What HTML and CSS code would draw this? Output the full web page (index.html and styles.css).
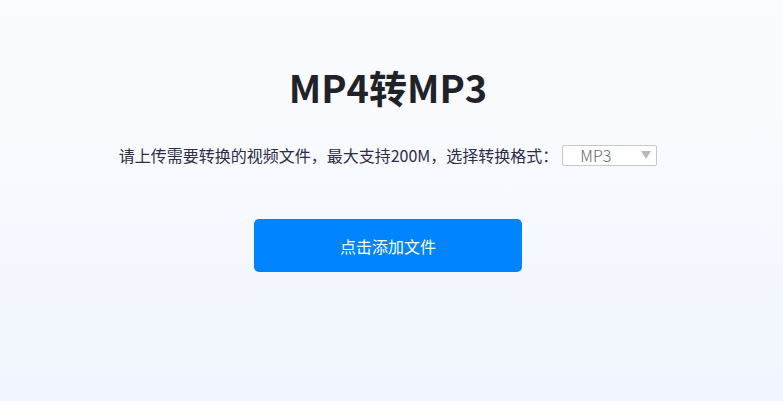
FILE: index.html
```html
<!DOCTYPE html>
<html lang="zh-CN">
<head>
<meta charset="utf-8">
<title>MP4转MP3</title>
<link rel="stylesheet" href="styles.css">
</head>
<body>
<main class="page">
  <h1 class="title">MP4转MP3</h1>
  <div class="desc-row">
    <span class="desc">请上传需要转换的视频文件，最大支持200M，选择转换格式：</span>
    <div class="select">
      <span class="select-value">MP3</span>
      <span class="select-arrow"></span>
    </div>
  </div>
  <button class="upload-btn" type="button">点击添加文件</button>
</main>
</body>
</html>
```

FILE: styles.css
```css
html, body {
  margin: 0;
  padding: 0;
  height: 100%;
}
body {
  background: linear-gradient(180deg, #fbfcfe 0%, #f1f6fe 100%);
  font-family: "Noto Sans CJK SC", "Noto Sans", sans-serif;
}
.page {
  box-sizing: border-box;
  width: 776px;
  min-height: 401px;
  display: flex;
  flex-direction: column;
  align-items: center;
  padding-top: 59px;
}
.title {
  margin: 0;
  font-size: 38px;
  line-height: 56px;
  font-weight: 700;
  color: #1f2329;
}
.desc-row {
  margin-top: 29px;
  display: flex;
  align-items: center;
  gap: 4px;
}
.desc {
  font-size: 16px;
  line-height: 22px;
  color: #2d2d4a;
}
.select {
  box-sizing: border-box;
  width: 95px;
  height: 21px;
  border: 1px solid #c4c7ce;
  border-radius: 2px;
  background: #fff;
  display: flex;
  align-items: center;
  padding: 0 5px 0 17px;
}
.select-value {
  flex: 1;
  font-size: 16px;
  line-height: 19px;
  color: #66676e;
  font-weight: 300;
}
.select-arrow {
  width: 0;
  height: 0;
  border-left: 5px solid transparent;
  border-right: 5px solid transparent;
  border-top: 8px solid #b8b8b8;
}
.upload-btn {
  margin-top: 53px;
  width: 268px;
  height: 53px;
  border: 0;
  border-radius: 5px;
  background: #0084ff;
  color: #fff;
  font-family: "Noto Sans CJK SC", "Noto Sans", sans-serif;
  font-size: 16px;
  cursor: pointer;
}
```
